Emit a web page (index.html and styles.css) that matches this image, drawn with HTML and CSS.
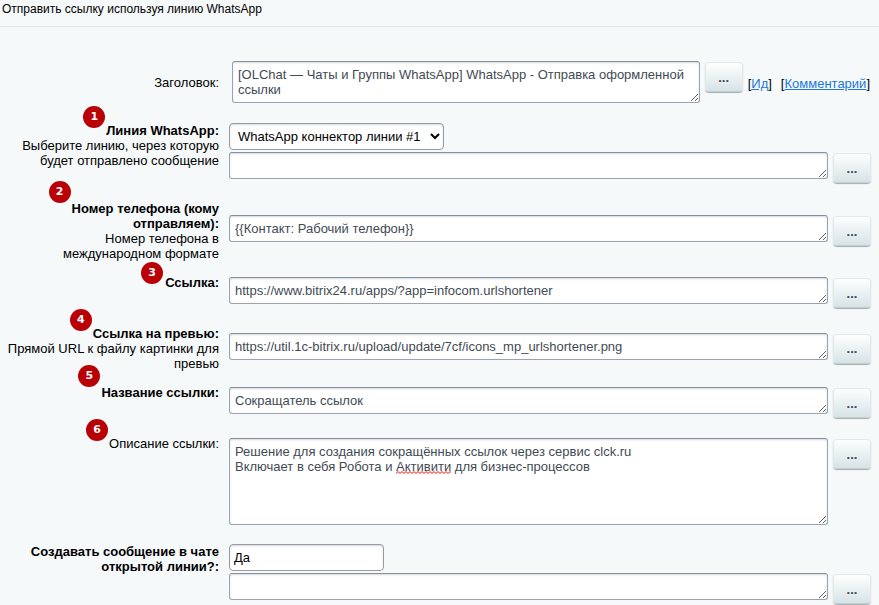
FILE: index.html
```html
<!DOCTYPE html>
<html lang="ru">
<head>
<meta charset="utf-8">
<meta name="viewport" content="width=device-width, initial-scale=1">
<title>Отправить ссылку используя линию WhatsApp</title>
<link rel="stylesheet" href="styles.css">
</head>
<body>
<h1 class="page-title">Отправить ссылку используя линию WhatsApp</h1>
<form class="form">
  <div class="row row-middle">
    <div class="caption"><label for="title">Заголовок:</label></div>
    <div class="control control-title">
      <textarea class="area" id="title" rows="2">[OLChat — Чаты и Группы WhatsApp] WhatsApp - Отправка оформленной ссылки</textarea>
      <button class="more" type="button">...</button>
      <span class="links"><span>[<a href="#id">Ид</a>]</span><span>[<a href="#comment">Комментарий</a>]</span></span>
    </div>
  </div>

  <div class="row gap-large">
    <div class="caption">
      <label class="required" for="line"><span class="anchor"><span class="badge">1</span></span>Линия WhatsApp:</label>
      <div>Выберите линию, через которую будет отправлено сообщение</div>
    </div>
    <div class="stack">
      <select class="picker" id="line"><option>WhatsApp коннектор линии #1</option></select>
      <div class="control">
        <textarea class="area" rows="1" aria-labelledby="line"></textarea>
        <button class="more" type="button">...</button>
      </div>
    </div>
  </div>

  <div class="row row-middle gap-medium">
    <div class="caption">
      <label class="required" for="phone"><span class="anchor"><span class="badge badge-high">2</span></span>Номер телефона (кому отправляем):</label>
      <div>Номер телефона в международном формате</div>
    </div>
    <div class="control">
      <textarea class="area" id="phone" rows="1">{{Контакт: Рабочий телефон}}</textarea>
      <button class="more" type="button">...</button>
    </div>
  </div>

  <div class="row gap-small">
    <div class="caption">
      <label class="required" for="link"><span class="anchor"><span class="badge badge-low">3</span></span>Ссылка:</label>
    </div>
    <div class="control control-inset">
      <textarea class="area" id="link" rows="1">https://www.bitrix24.ru/apps/?app=infocom.urlshortener</textarea>
      <button class="more" type="button">...</button>
    </div>
  </div>

  <div class="row row-middle gap-medium">
    <div class="caption">
      <label class="required" for="preview"><span class="anchor"><span class="badge">4</span></span>Ссылка на превью:</label>
      <div>Прямой URL к файлу картинки для превью</div>
    </div>
    <div class="control">
      <textarea class="area" id="preview" rows="1">https://util.1c-bitrix.ru/upload/update/7cf/icons_mp_urlshortener.png</textarea>
      <button class="more" type="button">...</button>
    </div>
  </div>

  <div class="row gap-small">
    <div class="caption">
      <label class="required" for="name"><span class="anchor"><span class="badge badge-high">5</span></span>Название ссылки:</label>
    </div>
    <div class="control control-inset">
      <textarea class="area" id="name" rows="1">Сокращатель ссылок</textarea>
      <button class="more" type="button">...</button>
    </div>
  </div>

  <div class="row gap-medium">
    <div class="caption">
      <label for="about"><span class="anchor"><span class="badge">6</span></span>Описание ссылки:</label>
    </div>
    <div class="control control-inset">
      <textarea class="area" id="about" rows="5">Решение для создания сокращённых ссылок через сервис clck.ru
Включает в себя Робота и Активити для бизнес-процессов</textarea>
      <svg class="spelling" width="55" height="3" aria-hidden="true">
        <defs><pattern id="wave" width="4" height="3" patternUnits="userSpaceOnUse"><path d="M-1 1.5 L0 2.5 L2 .5 L4 2.5 L5 1.5" fill="none" stroke="#f00" stroke-width="1"/></pattern></defs>
        <rect width="55" height="3" fill="url(#wave)"/>
      </svg>
      <button class="more" type="button">...</button>
    </div>
  </div>

  <div class="row gap-large">
    <div class="caption">
      <label class="required" for="create">Создавать сообщение в чате открытой линии?:</label>
    </div>
    <div class="stack">
      <input class="answer" id="create" type="text" value="Да">
      <div class="control">
        <textarea class="area" rows="1" aria-labelledby="create"></textarea>
        <button class="more" type="button">...</button>
      </div>
    </div>
  </div>
</form>
</body>
</html>
```
FILE: styles.css
```css
* {
  box-sizing: border-box;
}

body {
  margin: 0;
  background: #f5f9fa;
  color: #000;
  font: 13px/15px "Liberation Sans", Arial, sans-serif;
}

textarea,
input,
select,
button {
  margin: 0;
  font: inherit;
}

.page-title {
  margin: 0;
  padding: 2px 2px 9px;
  border-bottom: 1px solid #dce7ed;
  font-size: 12px;
  font-weight: 400;
}

.form {
  padding: 34px 8px 0 0;
}

.row {
  display: grid;
  grid-template-columns: 219px minmax(0, 1fr);
  column-gap: 10px;
  align-items: start;
}

.row-middle {
  align-items: center;
}

.gap-small {
  margin-top: 14px;
}

.gap-medium {
  margin-top: 17px;
}

.gap-large {
  margin-top: 19px;
}

.caption {
  padding-left: 6px;
  text-align: right;
}

.required {
  font-weight: 700;
}

.stack {
  display: flex;
  flex-direction: column;
  align-items: flex-start;
  gap: 2px;
}

.stack .control {
  width: 100%;
}

.control {
  position: relative;
  display: flex;
  align-items: flex-start;
  gap: 5px;
}

.control-inset {
  padding-top: 2px;
}

.control-title {
  padding: 0 1px 1px 3px;
}

.area {
  display: block;
  flex: 1;
  min-width: 0;
  padding: 5px;
  border: 1px solid #9ba3b1;
  border-top-color: #87919c;
  border-radius: 3px;
  background: #fff;
  box-shadow: inset 0 1px 2px #d3d9dd;
  color: #3f4b54;
  overflow: hidden;
  resize: vertical;
}

.picker,
.answer {
  height: 27px;
  border: 1px solid #979b9f;
  border-radius: 4px;
  background: #fff;
  box-shadow: inset 0 1px 2px #d3d9dd;
  color: #000;
}

.picker {
  width: 215px;
  padding: 0 0 0 4px;
}

.answer {
  width: 155px;
  padding: 0 4px;
}

.more {
  flex: none;
  width: 38px;
  height: 30px;
  margin-top: 1px;
  margin-bottom: 1px;
  padding: 0;
  border: 1px solid #e3e9eb;
  border-bottom-color: #c3cdd0;
  border-radius: 4px;
  background: linear-gradient(#fdfefe, #d7e3e6);
  box-shadow: 0 1px 1px #a5adb0;
  color: #3f4b54;
  font-weight: 700;
}

.links {
  display: flex;
  gap: 9px;
  padding-top: 15px;
}

.links a {
  color: #2277dd;
}

.anchor {
  position: relative;
}

.badge {
  position: absolute;
  top: -17px;
  right: 1px;
  width: 22px;
  height: 22px;
  border-radius: 50%;
  background: #b90007;
  color: #fff;
  font: 700 11px/22px "DejaVu Sans", sans-serif;
  text-align: center;
}

.badge-low {
  top: -13px;
  right: 2px;
}

.badge-high {
  top: -20px;
}

.spelling {
  position: absolute;
  top: 35px;
  left: 167px;
}
```
